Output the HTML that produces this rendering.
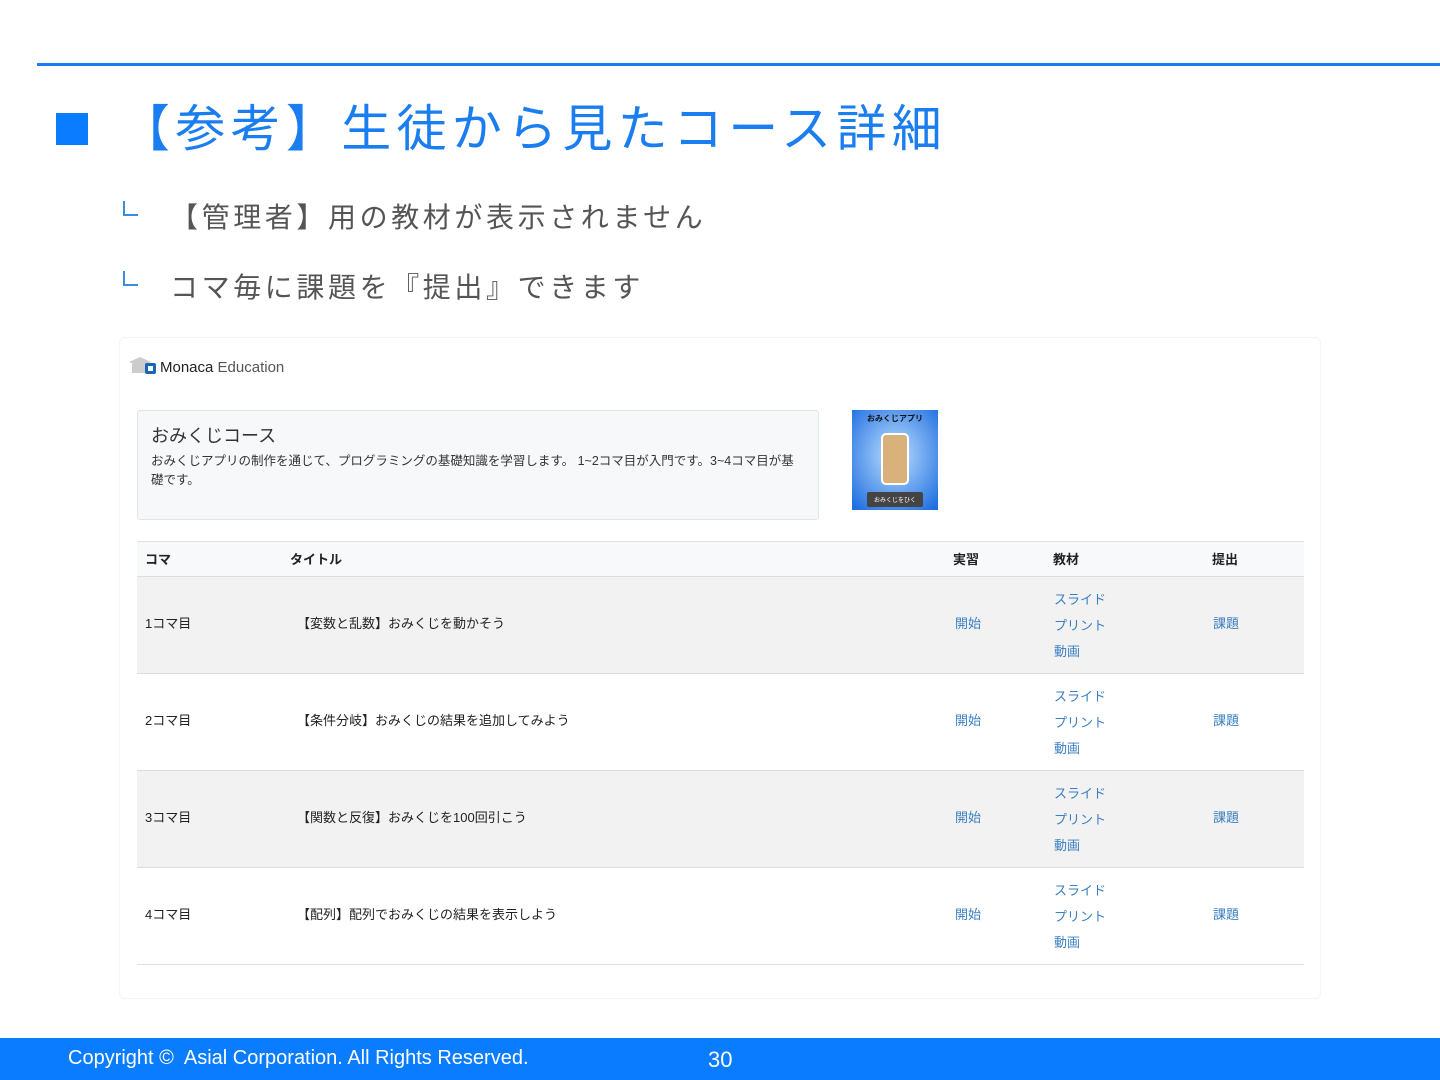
<!DOCTYPE html>
<html><head><meta charset="utf-8">
<style>
*{margin:0;padding:0;box-sizing:border-box}
body{width:1440px;height:1080px;background:#fff;position:relative;overflow:hidden;font-family:"Liberation Sans","Noto Sans CJK JP",sans-serif}
.a{position:absolute;white-space:nowrap}
.t{font-size:13px;color:#222}
.l{font-size:13px;color:#3a7fc1}
.row{position:absolute;left:137px;width:1167px;height:97px;border-bottom:1px solid #ddd}
.tree{position:absolute;width:15px;height:15px;border-left:2px solid #3a8ee0;border-bottom:2px solid #3a8ee0}
</style></head><body>
<div class="a" style="left:37px;top:63px;width:1403px;height:3px;background:#1a7ef0"></div>
<div class="a" style="left:56px;top:113px;width:32px;height:32px;background:#0a7cff"></div>
<div class="a" style="left:120px;top:96px;font-size:50px;color:#1a7ef0;letter-spacing:5.3px;line-height:66px">【参考】生徒から見たコース詳細</div>
<div class="tree" style="left:123px;top:201px"></div>
<div class="a" style="left:170px;top:198px;font-size:28px;color:#555;letter-spacing:3.6px;line-height:40px">【管理者】用の教材が表示されません</div>
<div class="tree" style="left:123px;top:271px"></div>
<div class="a" style="left:170px;top:268px;font-size:28px;color:#555;letter-spacing:3.6px;line-height:40px">コマ毎に課題を『提出』できます</div>

<div class="a" style="left:119px;top:337px;width:1202px;height:662px;border:1px solid #f4f4f4;border-radius:6px"></div>
<svg class="a" style="left:127px;top:355px" width="30" height="22"><path d="M2 7 L13 2 L24 7 L13 12Z" fill="#ccc"/><rect x="5" y="9" width="14" height="9" fill="#ccc"/><rect x="18" y="8" width="11" height="11" rx="2" fill="#1866b5"/><rect x="21" y="11" width="5" height="5" fill="#fff"/></svg>
<div class="a" style="left:160px;top:359px;font-size:15px;color:#333"><span style="color:#222">Monaca</span> <span style="color:#555">Education</span></div>

<div class="a" style="left:137px;top:410px;width:682px;height:110px;background:#f6f8fa;border:1px solid #e2e5e8;border-radius:3px"></div>
<div class="a" style="left:151px;top:422px;font-size:18px;color:#333">おみくじコース</div>
<div class="a" style="left:151px;top:452px;font-size:12.5px;color:#333;line-height:19px;white-space:normal;width:655px">おみくじアプリの制作を通じて、プログラミングの基礎知識を学習します。 1~2コマ目が入門です。3~4コマ目が基礎です。</div>

<svg class="a" style="left:852px;top:410px" width="86" height="100">
<defs><radialGradient id="g" cx="50%" cy="45%" r="70%"><stop offset="0" stop-color="#bfe0ff"/><stop offset="1" stop-color="#1f6fe0"/></radialGradient></defs>
<rect width="86" height="100" fill="url(#g)"/>
<text x="43" y="11" font-size="8" font-weight="bold" text-anchor="middle" fill="#111" font-family="Noto Sans CJK JP">おみくじアプリ</text>
<rect x="30" y="24" width="26" height="50" rx="4" fill="#d8b27a" stroke="#fff" stroke-width="2"/>
<rect x="15" y="82" width="56" height="15" rx="2" fill="#444"/>
<text x="43" y="92" font-size="6" text-anchor="middle" fill="#fff" font-family="Noto Sans CJK JP">おみくじをひく</text>
</svg>

<div class="a" style="left:137px;top:541px;width:1167px;height:36px;background:#f8f9fa;border-top:1px solid #e2e2e2;border-bottom:1px solid #dcdcdc"></div>
<div class="a t" style="left:145px;top:549px;font-weight:bold">コマ</div>
<div class="a t" style="left:290px;top:549px;font-weight:bold">タイトル</div>
<div class="a t" style="left:953px;top:549px;font-weight:bold">実習</div>
<div class="a t" style="left:1053px;top:549px;font-weight:bold">教材</div>
<div class="a t" style="left:1212px;top:549px;font-weight:bold">提出</div>

<div class="row" style="top:577px;background:#f2f2f2"></div>
<div class="row" style="top:674px"></div>
<div class="row" style="top:771px;background:#f2f2f2"></div>
<div class="row" style="top:868px"></div>

<div class="a t" style="left:145px;top:613px">1コマ目</div>
<div class="a t" style="left:297px;top:613px">【変数と乱数】おみくじを動かそう</div>
<div class="a t" style="left:145px;top:710px">2コマ目</div>
<div class="a t" style="left:297px;top:710px">【条件分岐】おみくじの結果を追加してみよう</div>
<div class="a t" style="left:145px;top:807px">3コマ目</div>
<div class="a t" style="left:297px;top:807px">【関数と反復】おみくじを100回引こう</div>
<div class="a t" style="left:145px;top:904px">4コマ目</div>
<div class="a t" style="left:297px;top:904px">【配列】配列でおみくじの結果を表示しよう</div>

<div class="a l" style="left:955px;top:613px">開始</div>
<div class="a l" style="left:955px;top:710px">開始</div>
<div class="a l" style="left:955px;top:807px">開始</div>
<div class="a l" style="left:955px;top:904px">開始</div>
<div class="a l" style="left:1213px;top:613px">課題</div>
<div class="a l" style="left:1213px;top:710px">課題</div>
<div class="a l" style="left:1213px;top:807px">課題</div>
<div class="a l" style="left:1213px;top:904px">課題</div>

<div class="a l" style="left:1054px;top:587px;line-height:26px">スライド<br>プリント<br>動画</div>
<div class="a l" style="left:1054px;top:684px;line-height:26px">スライド<br>プリント<br>動画</div>
<div class="a l" style="left:1054px;top:781px;line-height:26px">スライド<br>プリント<br>動画</div>
<div class="a l" style="left:1054px;top:878px;line-height:26px">スライド<br>プリント<br>動画</div>

<div class="a" style="left:0;top:1038px;width:1440px;height:42px;background:#0a7cff"></div>
<div class="a" style="left:68px;top:1047px;font-size:20px;color:#fff">Copyright ©&nbsp; Asial Corporation. All Rights Reserved.</div>
<div class="a" style="left:708px;top:1047px;font-size:22px;color:#fff">30</div>
</body></html>
